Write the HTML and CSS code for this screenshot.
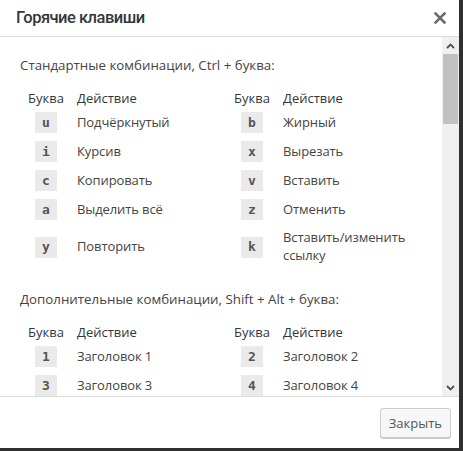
FILE: index.html
```html
<!DOCTYPE html>
<html lang="ru">
<head>
<meta charset="utf-8">
<title>Горячие клавиши</title>
<link rel="stylesheet" href="styles.css">
</head>
<body>
<div class="dialog">
  <div class="head">
    <h1 class="title">Горячие клавиши</h1>
    <button class="close" aria-label="Закрыть">
      <svg width="12" height="12" viewBox="0 0 12 12"><path d="M1.5 1.5L10.5 10.5M10.5 1.5L1.5 10.5" stroke="#6a6a6a" stroke-width="2.5" stroke-linecap="square"/></svg>
    </button>
  </div>
  <div class="body">
    <div class="scroll">
      <p class="sec first">Стандартные комбинации, Ctrl + буква:</p>
      <div class="keys">
        <div class="th k">Буква</div><div class="th">Действие</div><div class="th k">Буква</div><div class="th">Действие</div>
        <div class="kc"><kbd>u</kbd></div><div class="act">Подчёркнутый</div><div class="kc"><kbd>b</kbd></div><div class="act">Жирный</div>
        <div class="kc"><kbd>i</kbd></div><div class="act">Курсив</div><div class="kc"><kbd>x</kbd></div><div class="act">Вырезать</div>
        <div class="kc"><kbd>c</kbd></div><div class="act">Копировать</div><div class="kc"><kbd>v</kbd></div><div class="act">Вставить</div>
        <div class="kc"><kbd>a</kbd></div><div class="act">Выделить всё</div><div class="kc"><kbd>z</kbd></div><div class="act">Отменить</div>
        <div class="kc"><kbd>y</kbd></div><div class="act">Повторить</div><div class="kc"><kbd>k</kbd></div><div class="act">Вставить/изменить ссылку</div>
      </div>
      <p class="sec">Дополнительные комбинации, Shift + Alt + буква:</p>
      <div class="keys">
        <div class="th k">Буква</div><div class="th">Действие</div><div class="th k">Буква</div><div class="th">Действие</div>
        <div class="kc"><kbd>1</kbd></div><div class="act">Заголовок 1</div><div class="kc"><kbd>2</kbd></div><div class="act">Заголовок 2</div>
        <div class="kc"><kbd>3</kbd></div><div class="act">Заголовок 3</div><div class="kc"><kbd>4</kbd></div><div class="act">Заголовок 4</div>
      </div>
    </div>
    <div class="sbar">
      <div class="arr"><svg width="9" height="6" viewBox="0 0 9 6"><path d="M1 5L4.5 1.5L8 5" fill="none" stroke="#505050" stroke-width="1.8"/></svg></div>
      <div class="thumb"></div>
      <div class="track"></div>
      <div class="arr"><svg width="9" height="6" viewBox="0 0 9 6"><path d="M1 1L4.5 4.5L8 1" fill="none" stroke="#505050" stroke-width="1.8"/></svg></div>
    </div>
  </div>
  <div class="foot">
    <button class="btn">Закрыть</button>
  </div>
</div>
</body>
</html>
```
FILE: styles.css
```css
* { box-sizing: border-box; }
html, body { margin: 0; padding: 0; }
body {
  width: 463px;
  height: 451px;
  background: #2f2f2f;
  font-family: "Open Sans", "Noto Sans", sans-serif;
  color: #444;
  overflow: hidden;
}
.dialog {
  width: 459px;
  height: 448px;
  background: #fff;
  display: flex;
  flex-direction: column;
}
.head {
  height: 37px;
  border-bottom: 1px solid #dcdcdc;
  display: flex;
  align-items: center;
  justify-content: space-between;
  padding: 0 12px 0 16px;
  flex: none;
}
.title {
  margin: 0;
  font-family: Roboto, "Open Sans", sans-serif;
  font-size: 16.5px;
  font-weight: 500;
  color: #32373c;
  line-height: 24px;
  letter-spacing: -0.5px;
}
.close {
  border: 0;
  background: none;
  padding: 0;
  width: 14px;
  height: 14px;
  display: flex;
  align-items: center;
  justify-content: center;
}
.body {
  flex: none;
  height: 360px;
  display: flex;
  border-bottom: 1px solid #dcdcdc;
}
.scroll {
  flex: 1;
  overflow: hidden;
  padding: 19px 20px 0 20px;
}
.sec {
  margin: 20px 0 14px;
  font-size: 13.3px;
  line-height: 19px;
  color: #444;
}
.sec.first { margin-top: 0; }
.keys {
  margin-left: 8px;
  display: grid;
  grid-template-columns: 36px 144px 36px 1fr;
  column-gap: 13px;
  align-items: center;
  font-size: 13px;
  line-height: 18px;
}
.th { color: #32373c; height: 19px; line-height: 19px; }
.th.k { justify-self: center; white-space: nowrap; }
.kc {
  justify-self: center;
  padding: 4px 0;
}
kbd {
  display: flex;
  align-items: center;
  justify-content: center;
  width: 22px;
  height: 21px;
  background: #eaeaea;
  font-family: "DejaVu Sans Mono", "Liberation Mono", monospace;
  font-size: 13px;
  color: #555;
  font-weight: 600;
}
.act { color: #444; padding: 4px 0 6px; letter-spacing: -0.1px; }
.sbar {
  width: 17px;
  flex: none;
  background: #f0f0f0;
  display: flex;
  flex-direction: column;
}
.arr {
  height: 17px;
  display: flex;
  align-items: center;
  justify-content: center;
}
.thumb {
  height: 70px;
  margin: 0 1px;
  background: #c1c1c1;
}
.track { flex: 1; }
.foot {
  flex: 1;
  display: flex;
  align-items: center;
  justify-content: flex-end;
  padding: 0 8px 0 0;
}
.btn {
  height: 30px;
  padding: 0 8px;
  border: 1px solid #cccccc;
  border-radius: 3px;
  background: #f7f7f7;
  box-shadow: 0 1px 0 #cccccc;
  font-family: "Open Sans", "Noto Sans", sans-serif;
  font-size: 13px;
  color: #555;
}
```
